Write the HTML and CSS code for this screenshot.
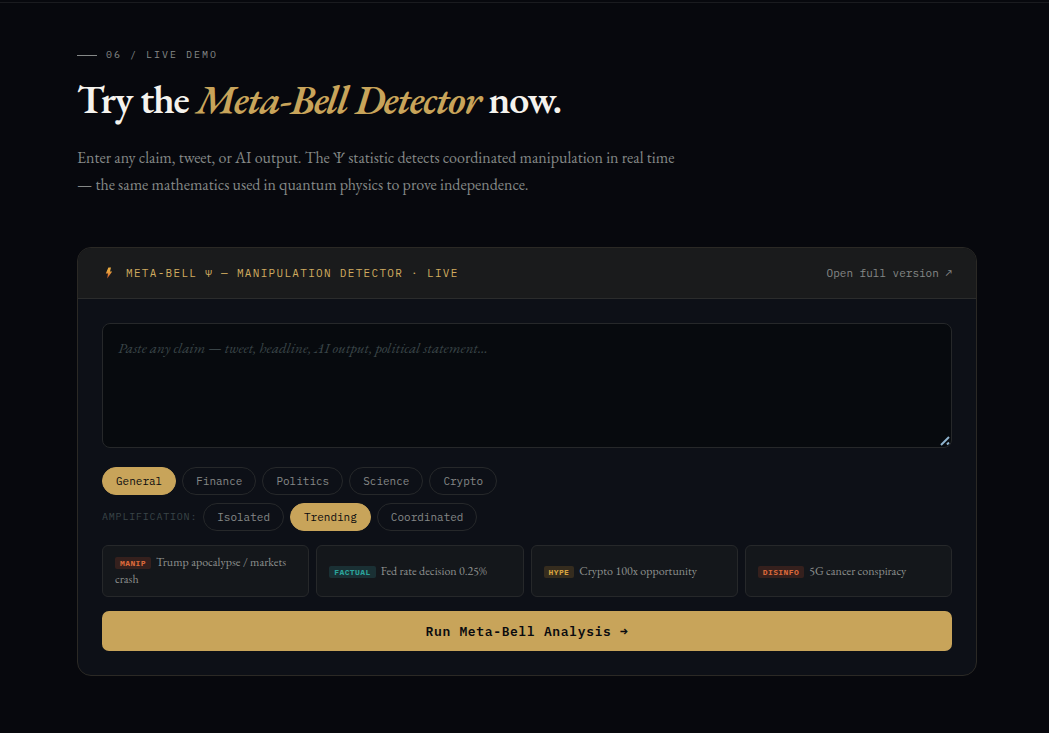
FILE: index.html
```html
<!DOCTYPE html>
<html lang="en">
<head>
    <meta charset="UTF-8">
    <meta name="viewport" content="width=device-width, initial-scale=1.0">
    <title>Meta-Bell Detector</title>
    <link rel="stylesheet" href="styles.css">
</head>
<body>
    <section class="demo">
        <div class="eyebrow">06 / LIVE DEMO</div>
        <h2 class="title">Try the <em>Meta-Bell Detector</em> now.</h2>
        <p class="lead">Enter any claim, tweet, or AI output. The Ψ statistic detects coordinated manipulation in real time — the same mathematics used in quantum physics to prove independence.</p>

        <div class="card">
            <div class="card-header">
                <div class="card-title">
                    <svg class="bolt" width="8" height="12" viewBox="0 0 8 12" aria-hidden="true">
                        <defs>
                            <linearGradient id="bolt-fill" x1="0" y1="0" x2="0" y2="1">
                                <stop offset="0.3" stop-color="#e8a83f"/>
                                <stop offset="1" stop-color="#d4552a"/>
                            </linearGradient>
                        </defs>
                        <path d="M3.4 0.5 L0.8 6.6 H3 L2.2 11.6 L7.2 4.6 H5 L6 0.5 Z" fill="url(#bolt-fill)"/>
                    </svg>
                    <span>META-BELL Ψ — MANIPULATION DETECTOR · LIVE</span>
                </div>
                <a class="full-link" href="#">Open full version ↗</a>
            </div>

            <form class="card-body">
                <div class="claim">
                    <textarea id="claim" aria-label="Claim" placeholder="Paste any claim — tweet, headline, AI output, political statement..."></textarea>
                    <svg class="grip" width="10" height="10" viewBox="0 0 10 10" aria-hidden="true">
                        <path d="M1 9 L9 1" stroke="#8fb4cf" stroke-width="2"/>
                        <path d="M7 8.5 L9 6.5" stroke="#8fb4cf" stroke-width="2"/>
                    </svg>
                </div>

                <div class="chips">
                    <button type="button" class="chip active">General</button>
                    <button type="button" class="chip">Finance</button>
                    <button type="button" class="chip">Politics</button>
                    <button type="button" class="chip">Science</button>
                    <button type="button" class="chip">Crypto</button>
                </div>

                <div class="chips">
                    <span class="chips-label">AMPLIFICATION:</span>
                    <button type="button" class="chip">Isolated</button>
                    <button type="button" class="chip active">Trending</button>
                    <button type="button" class="chip">Coordinated</button>
                </div>

                <div class="examples">
                    <button type="button" class="example"><span class="tag tag-red">MANIP</span>Trump apocalypse / markets crash</button>
                    <button type="button" class="example"><span class="tag tag-teal">FACTUAL</span>Fed rate decision 0.25%</button>
                    <button type="button" class="example"><span class="tag tag-gold">HYPE</span>Crypto 100x opportunity</button>
                    <button type="button" class="example"><span class="tag tag-red">DISINFO</span>5G cancer conspiracy</button>
                </div>

                <button type="button" class="run">Run Meta-Bell Analysis →</button>
            </form>
        </div>
    </section>
</body>
</html>
```
FILE: styles.css
```css
:root {
    --bg: #07080d;
    --gold: #c8a45a;
    --grey: #858887;
    --dim: #3a4548;
    --line: #26282a;
    --serif: "EB Garamond", "Liberation Serif", serif;
    --mono: "IBM Plex Mono", "Liberation Mono", monospace;
}

* {
    box-sizing: border-box;
}

body {
    margin: 0;
    padding-top: 2px;
    background: var(--bg);
    color: var(--grey);
    font-family: var(--serif);
}

button {
    cursor: pointer;
}

.demo {
    border-top: 1px solid #1a1b1f;
    padding: 44px 72px 56px 77px;
}

.eyebrow {
    display: flex;
    align-items: center;
    gap: 9px;
    font: 10px/16px var(--mono);
    letter-spacing: 2px;
}

.eyebrow::before {
    content: "";
    width: 20px;
    height: 1px;
    background: var(--grey);
}

.title {
    margin: 11px 0 20px;
    font-size: 40px;
    line-height: 50px;
    font-weight: 600;
    letter-spacing: -0.03em;
    color: #f5f3ee;
}

.title em {
    color: var(--gold);
}

.lead {
    max-width: 600px;
    margin: 0 0 49px;
    font-size: 16px;
    line-height: 27px;
}

.card {
    border: 1px solid #2b2925;
    border-radius: 14px;
    background: #0d1017;
    overflow: hidden;
}

.card-header {
    display: flex;
    align-items: center;
    justify-content: space-between;
    padding: 16px 24px;
    border-bottom: 1px solid #2b2c2c;
    background: #1a1b1c;
    line-height: 18px;
}

.card-title {
    display: flex;
    align-items: center;
    gap: 13px;
    padding-left: 3px;
    font-family: var(--mono);
    font-size: 11px;
    letter-spacing: 0.12em;
    color: #d0ab5f;
}

.full-link {
    font-family: var(--mono);
    font-size: 11px;
    color: var(--grey);
    text-decoration: none;
}

.card-body {
    padding: 24px;
}

.claim {
    position: relative;
    margin-bottom: 19px;
}

.claim textarea {
    display: block;
    width: 100%;
    height: 125px;
    padding: 11px 15px;
    border: 1px solid var(--line);
    border-radius: 8px;
    background: #070a0e;
    color: #f5f3ee;
    font: 15px/26px var(--serif);
    resize: none;
}

.claim textarea::placeholder {
    color: var(--dim);
    font-style: italic;
}

.grip {
    position: absolute;
    right: 2px;
    bottom: 2px;
}

.chips {
    display: flex;
    flex-wrap: wrap;
    align-items: center;
    gap: 6px;
    margin-bottom: 8px;
}

.chips-label {
    font: 10px/16px var(--mono);
    letter-spacing: 0.08em;
    color: var(--dim);
}

.chip {
    padding: 5px 13px;
    border: 1px solid var(--line);
    border-radius: 14px;
    background: none;
    color: var(--grey);
    font: 11px/16px var(--mono);
}

.chip.active {
    border-color: var(--gold);
    background: var(--gold);
    color: #0a0b0f;
}

.examples {
    display: grid;
    grid-template-columns: repeat(4, 1fr);
    gap: 7px;
    margin: 14px 0;
}

.example {
    padding: 8px 12px;
    border: 1px solid var(--line);
    border-radius: 6px;
    background: #14171b;
    color: #8d908e;
    font: 12px/17px var(--serif);
    text-align: left;
}

.tag {
    display: inline-block;
    margin-right: 5px;
    padding: 0 5px;
    border-radius: 2px;
    font: bold 8px/12px var(--mono);
    letter-spacing: 0.05em;
}

.tag-red {
    background: #35201d;
    color: #d9683a;
}

.tag-teal {
    background: #1a3034;
    color: #2ba39b;
}

.tag-gold {
    background: #352c1e;
    color: #d6a33f;
}

.run {
    display: block;
    width: 100%;
    padding: 11px 10px 9px;
    border: 0;
    border-radius: 7px;
    background: var(--gold);
    color: #0a0b0f;
    font: 600 13px/20px var(--mono);
    letter-spacing: 0.05em;
}
```
